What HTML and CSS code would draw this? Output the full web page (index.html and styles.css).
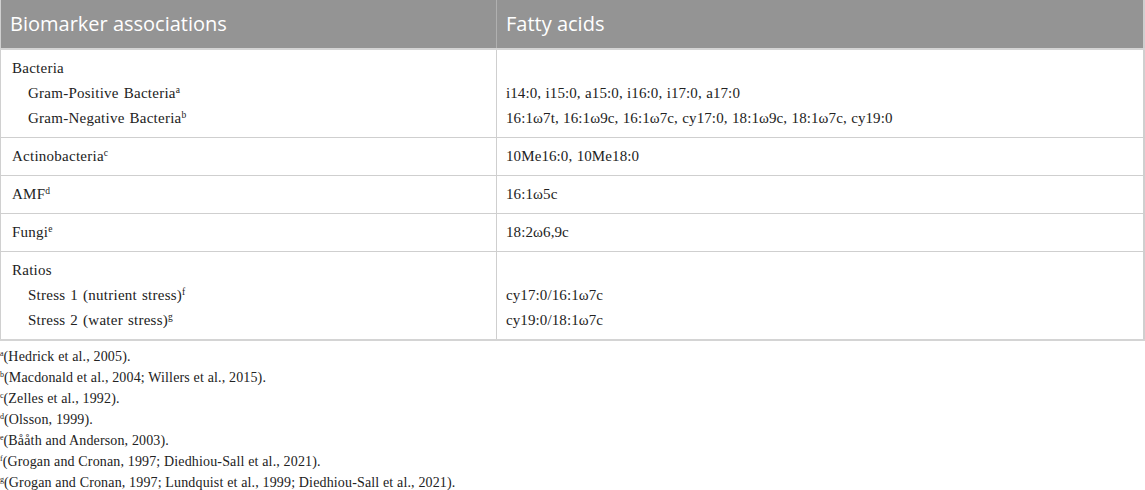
FILE: index.html
```html
<!DOCTYPE html>
<html>
<head>
<meta charset="utf-8">
<link rel="stylesheet" href="styles.css">
</head>
<body>
<table class="tbl">
  <thead>
    <tr>
      <th class="c1">Biomarker associations</th>
      <th class="c2">Fatty acids</th>
    </tr>
  </thead>
  <tbody>
    <tr>
      <td class="c1">
        <div class="ln">Bacteria</div>
        <div class="ln ind">Gram-Positive Bacteria<sup>a</sup></div>
        <div class="ln ind">Gram-Negative Bacteria<sup>b</sup></div>
      </td>
      <td class="c2">
        <div class="ln">&nbsp;</div>
        <div class="ln">i14:0, i15:0, a15:0, i16:0, i17:0, a17:0</div>
        <div class="ln">16:1ω7t, 16:1ω9c, 16:1ω7c, cy17:0, 18:1ω9c, 18:1ω7c, cy19:0</div>
      </td>
    </tr>
    <tr>
      <td class="c1"><div class="ln">Actinobacteria<sup>c</sup></div></td>
      <td class="c2"><div class="ln">10Me16:0, 10Me18:0</div></td>
    </tr>
    <tr>
      <td class="c1"><div class="ln">AMF<sup>d</sup></div></td>
      <td class="c2"><div class="ln">16:1ω5c</div></td>
    </tr>
    <tr>
      <td class="c1"><div class="ln">Fungi<sup>e</sup></div></td>
      <td class="c2"><div class="ln">18:2ω6,9c</div></td>
    </tr>
    <tr>
      <td class="c1">
        <div class="ln">Ratios</div>
        <div class="ln ind">Stress 1 (nutrient stress)<sup>f</sup></div>
        <div class="ln ind">Stress 2 (water stress)<sup>g</sup></div>
      </td>
      <td class="c2">
        <div class="ln">&nbsp;</div>
        <div class="ln">cy17:0/16:1ω7c</div>
        <div class="ln">cy19:0/18:1ω7c</div>
      </td>
    </tr>
  </tbody>
</table>
<div class="notes">
  <div class="note"><sup>a</sup>(Hedrick et al., 2005).</div>
  <div class="note"><sup>b</sup>(Macdonald et al., 2004; Willers et al., 2015).</div>
  <div class="note"><sup>c</sup>(Zelles et al., 1992).</div>
  <div class="note"><sup>d</sup>(Olsson, 1999).</div>
  <div class="note"><sup>e</sup>(Bååth and Anderson, 2003).</div>
  <div class="note"><sup>f</sup>(Grogan and Cronan, 1997; Diedhiou-Sall et al., 2021).</div>
  <div class="note"><sup>g</sup>(Grogan and Cronan, 1997; Lundquist et al., 1999; Diedhiou-Sall et al., 2021).</div>
</div>
</body>
</html>
```

FILE: styles.css
```css
html, body {
  margin: 0;
  padding: 0;
  background: #ffffff;
}

body {
  font-family: "Liberation Serif", "Times New Roman", serif;
  color: #222222;
  width: 1145px;
}

.tbl {
  width: 1145px;
  border-collapse: collapse;
  table-layout: fixed;
  border-left: 1px solid #d0d0d0;
  border-right: 2px solid #cfcfcf;
}

.tbl th {
  background: #949494;
  color: #ffffff;
  font-family: "Open Sans", "Noto Sans", sans-serif;
  font-weight: 400;
  font-size: 20px;
  text-align: left;
  height: 46px;
  padding: 0 0 2px 9px;
  border-bottom: 2px solid #d4d4d4;
  vertical-align: middle;
}

.tbl th.c1 {
  width: 486px;
  border-right: 1px solid #b0b0b0;
}

.tbl th.c2 {
  padding-left: 9px;
}

.tbl td {
  font-size: 15px;
  vertical-align: top;
  padding: 6px 0 6px 11px;
  border-bottom: 1px solid #cfcfcf;
}

.tbl td.c1 {
  border-right: 1px solid #cfcfcf;
}

.tbl td.c2 {
  padding-left: 9px;
}

.tbl tbody tr:last-child td {
  border-bottom: 2px solid #d4d4d4;
}

.ln {
  line-height: 25px;
  height: 25px;
  white-space: nowrap;
  letter-spacing: 0.25px;
  word-spacing: 1px;
}

.c2 .ln {
  letter-spacing: 0.1px;
  word-spacing: 0.5px;
}

.ind {
  padding-left: 16px;
}

sup {
  font-size: 9.5px;
  line-height: 0;
  vertical-align: 5px;
}

.notes {
  padding-top: 5px;
}

.note {
  font-size: 14px;
  line-height: 21px;
  letter-spacing: 0.15px;
  white-space: nowrap;
}

.note sup {
  font-size: 8px;
  letter-spacing: 0;
}
```
